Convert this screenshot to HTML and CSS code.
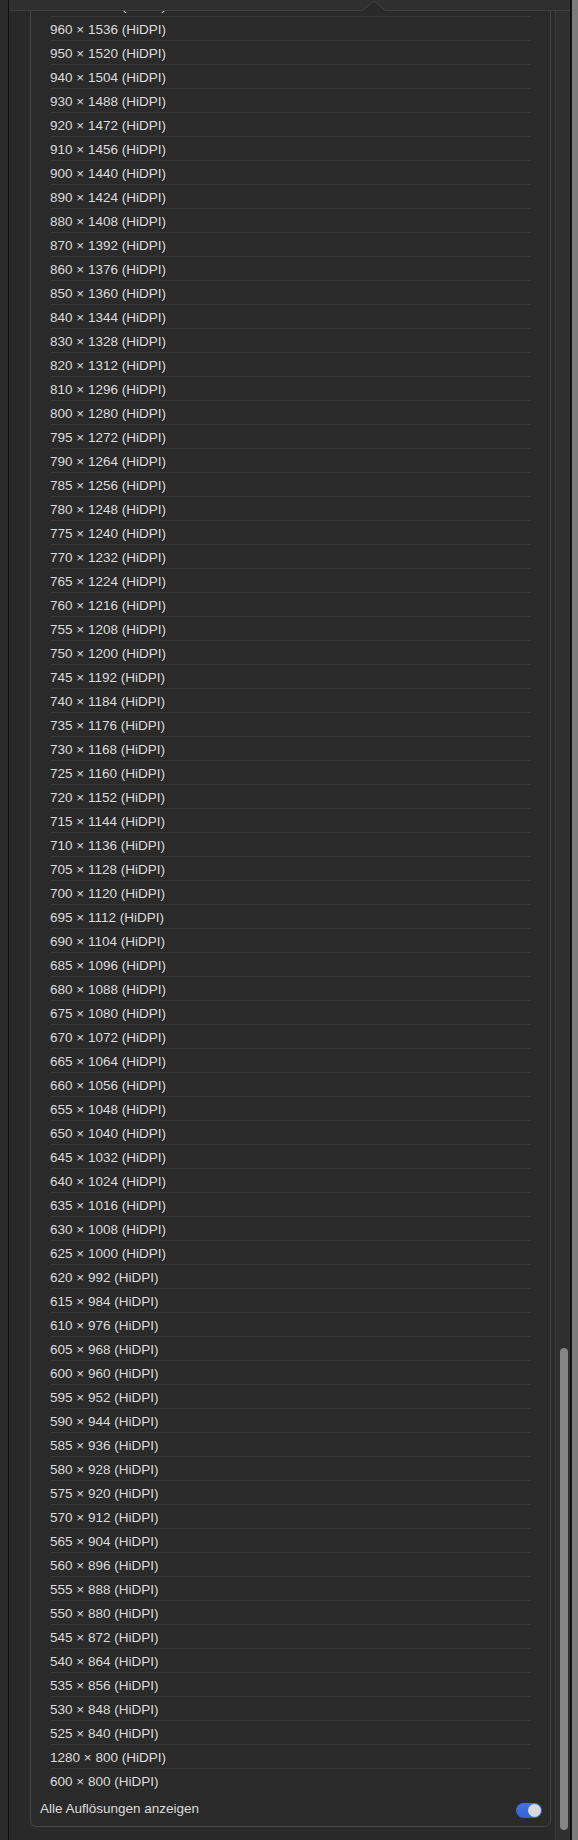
FILE: index.html
```html
<!DOCTYPE html>
<html lang="de">
<head>
<meta charset="utf-8">
<title>Auflösungen</title>
<link rel="stylesheet" href="styles.css">
</head>
<body>
<div class="window">
  <div class="edge-left"></div>
  <div class="main">
    <div class="topbar">
      <svg class="notch" width="24" height="12" viewBox="0 0 24 12">
        <polygon points="1,10.5 12,1 23,10.5 23,12 1,12" fill="#292929"/>
        <polyline points="0.5,10.5 12,0.8 23.5,10.5" fill="none" stroke="#434343" stroke-width="1"/>
      </svg>
    </div>
    <div class="body">
      <div class="viewport">
        <div class="card">
          <ul class="list">
            <li class="row">970 × 1552 (HiDPI)</li>
            <li class="row">960 × 1536 (HiDPI)</li>
            <li class="row">950 × 1520 (HiDPI)</li>
            <li class="row">940 × 1504 (HiDPI)</li>
            <li class="row">930 × 1488 (HiDPI)</li>
            <li class="row">920 × 1472 (HiDPI)</li>
            <li class="row">910 × 1456 (HiDPI)</li>
            <li class="row">900 × 1440 (HiDPI)</li>
            <li class="row">890 × 1424 (HiDPI)</li>
            <li class="row">880 × 1408 (HiDPI)</li>
            <li class="row">870 × 1392 (HiDPI)</li>
            <li class="row">860 × 1376 (HiDPI)</li>
            <li class="row">850 × 1360 (HiDPI)</li>
            <li class="row">840 × 1344 (HiDPI)</li>
            <li class="row">830 × 1328 (HiDPI)</li>
            <li class="row">820 × 1312 (HiDPI)</li>
            <li class="row">810 × 1296 (HiDPI)</li>
            <li class="row">800 × 1280 (HiDPI)</li>
            <li class="row">795 × 1272 (HiDPI)</li>
            <li class="row">790 × 1264 (HiDPI)</li>
            <li class="row">785 × 1256 (HiDPI)</li>
            <li class="row">780 × 1248 (HiDPI)</li>
            <li class="row">775 × 1240 (HiDPI)</li>
            <li class="row">770 × 1232 (HiDPI)</li>
            <li class="row">765 × 1224 (HiDPI)</li>
            <li class="row">760 × 1216 (HiDPI)</li>
            <li class="row">755 × 1208 (HiDPI)</li>
            <li class="row">750 × 1200 (HiDPI)</li>
            <li class="row">745 × 1192 (HiDPI)</li>
            <li class="row">740 × 1184 (HiDPI)</li>
            <li class="row">735 × 1176 (HiDPI)</li>
            <li class="row">730 × 1168 (HiDPI)</li>
            <li class="row">725 × 1160 (HiDPI)</li>
            <li class="row">720 × 1152 (HiDPI)</li>
            <li class="row">715 × 1144 (HiDPI)</li>
            <li class="row">710 × 1136 (HiDPI)</li>
            <li class="row">705 × 1128 (HiDPI)</li>
            <li class="row">700 × 1120 (HiDPI)</li>
            <li class="row">695 × 1112 (HiDPI)</li>
            <li class="row">690 × 1104 (HiDPI)</li>
            <li class="row">685 × 1096 (HiDPI)</li>
            <li class="row">680 × 1088 (HiDPI)</li>
            <li class="row">675 × 1080 (HiDPI)</li>
            <li class="row">670 × 1072 (HiDPI)</li>
            <li class="row">665 × 1064 (HiDPI)</li>
            <li class="row">660 × 1056 (HiDPI)</li>
            <li class="row">655 × 1048 (HiDPI)</li>
            <li class="row">650 × 1040 (HiDPI)</li>
            <li class="row">645 × 1032 (HiDPI)</li>
            <li class="row">640 × 1024 (HiDPI)</li>
            <li class="row">635 × 1016 (HiDPI)</li>
            <li class="row">630 × 1008 (HiDPI)</li>
            <li class="row">625 × 1000 (HiDPI)</li>
            <li class="row">620 × 992 (HiDPI)</li>
            <li class="row">615 × 984 (HiDPI)</li>
            <li class="row">610 × 976 (HiDPI)</li>
            <li class="row">605 × 968 (HiDPI)</li>
            <li class="row">600 × 960 (HiDPI)</li>
            <li class="row">595 × 952 (HiDPI)</li>
            <li class="row">590 × 944 (HiDPI)</li>
            <li class="row">585 × 936 (HiDPI)</li>
            <li class="row">580 × 928 (HiDPI)</li>
            <li class="row">575 × 920 (HiDPI)</li>
            <li class="row">570 × 912 (HiDPI)</li>
            <li class="row">565 × 904 (HiDPI)</li>
            <li class="row">560 × 896 (HiDPI)</li>
            <li class="row">555 × 888 (HiDPI)</li>
            <li class="row">550 × 880 (HiDPI)</li>
            <li class="row">545 × 872 (HiDPI)</li>
            <li class="row">540 × 864 (HiDPI)</li>
            <li class="row">535 × 856 (HiDPI)</li>
            <li class="row">530 × 848 (HiDPI)</li>
            <li class="row">525 × 840 (HiDPI)</li>
            <li class="row">1280 × 800 (HiDPI)</li>
            <li class="row">600 × 800 (HiDPI)</li>
          </ul>
          <div class="footer">
            <span class="footer-label">Alle Auflösungen anzeigen</span>
            <span class="toggle"><span class="knob"></span></span>
          </div>
        </div>
      </div>
      <div class="track">
        <div class="thumb"></div>
      </div>
    </div>
  </div>
  <div class="edge-right"><div class="edge-right-line"></div><div class="edge-right-fill"></div></div>
</div>
</body>
</html>
```
FILE: styles.css
```css
* { box-sizing: border-box; }

html, body {
  margin: 0;
  padding: 0;
  background: #292929;
}

body {
  font-family: "Liberation Sans", Arial, sans-serif;
  font-size: 13.5px;
  color: #dcdcdc;
}

.window {
  display: flex;
  width: 578px;
  height: 1840px;
  overflow: hidden;
}

.edge-left {
  width: 9px;
  flex: none;
  background: #2b2b2b;
  border-right: 1px solid #0f0f0f;
}

.main {
  width: 561px;
  flex: none;
  display: flex;
  flex-direction: column;
  background: #292929;
}

.topbar {
  position: relative;
  height: 11px;
  flex: none;
  background: #2f2f2f;
  border-bottom: 1px solid #3e3e3e;
}

.notch {
  position: absolute;
  left: 353px;
  top: 0;
  display: block;
}

.body {
  flex: 1;
  min-height: 0;
  display: flex;
}

.viewport {
  flex: 1;
  min-width: 0;
  overflow: hidden;
  padding: 0 4px 0 21px;
}

.card {
  margin-top: -20px;
  width: 521px;
  background: #2a2a2a;
  border: 1px solid #464646;
  border-radius: 6px;
}

.list {
  list-style: none;
  margin: 0;
  padding: 0;
}

.row {
  height: 24px;
  margin: 0 19px;
  padding-top: 2px;
  line-height: 21px;
  border-top: 1px solid #383838;
  white-space: nowrap;
}

.row:first-child {
  border-top-color: transparent;
}

.footer {
  height: 34px;
  display: flex;
  align-items: center;
  justify-content: space-between;
  padding: 0 8px 0 9px;
}

.footer-label {
  line-height: 34px;
}

.toggle {
  margin-top: 3px;
  width: 26px;
  height: 15px;
  border-radius: 8px;
  background: linear-gradient(#4272e6, #3561d6);
  display: flex;
  align-items: center;
  justify-content: flex-end;
  padding-right: 1px;
}

.knob {
  width: 13px;
  height: 13px;
  border-radius: 50%;
  background: #dadada;
}

.track {
  width: 15px;
  flex: none;
  background: #2f2f2f;
  border-left: 1px solid #3c3c3c;
  padding-left: 4px;
}

.thumb {
  width: 8px;
  height: 482px;
  margin-top: 1337px;
  border-radius: 4px;
  background: #858585;
}

.edge-right {
  width: 8px;
  flex: none;
  display: flex;
}

.edge-right-line {
  width: 2px;
  background: #121212;
}

.edge-right-fill {
  flex: 1;
  background: #7b7b7b;
}
```
